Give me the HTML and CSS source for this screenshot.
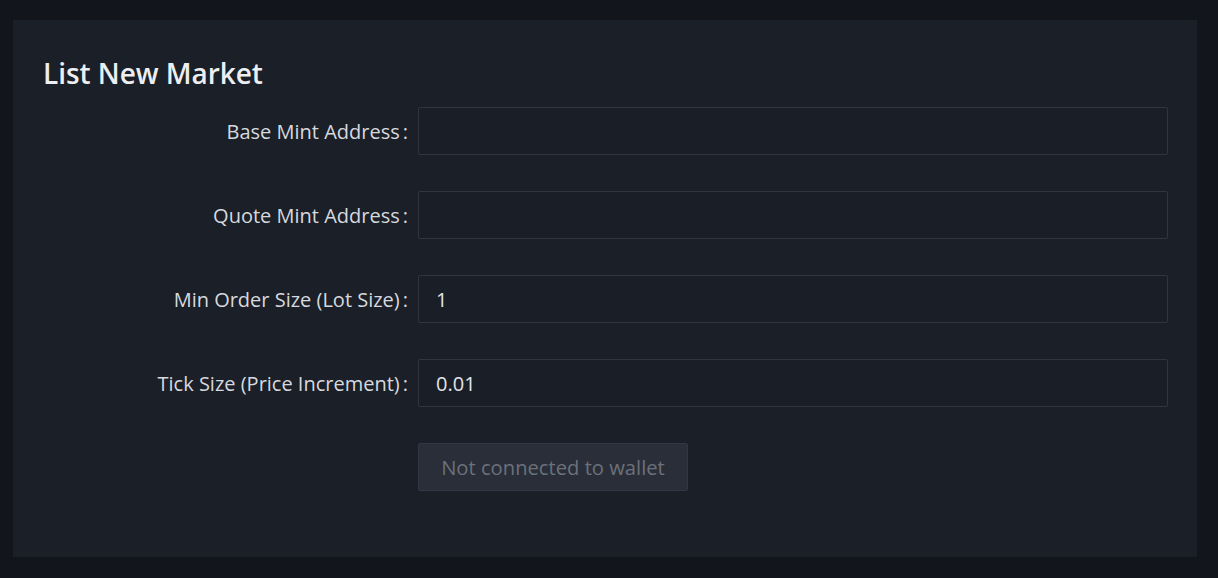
FILE: index.html
```html
<!DOCTYPE html>
<html>
<head>
<meta charset="utf-8">
<link rel="stylesheet" href="styles.css">
</head>
<body>
<div class="card">
  <h2 class="title">List New Market</h2>
  <form class="form">
    <div class="row">
      <label class="label">Base Mint Address<span class="colon">:</span></label>
      <div class="control"><input class="input" type="text" value=""></div>
    </div>
    <div class="row">
      <label class="label">Quote Mint Address<span class="colon">:</span></label>
      <div class="control"><input class="input" type="text" value=""></div>
    </div>
    <div class="row">
      <label class="label">Min Order Size (Lot Size)<span class="colon">:</span></label>
      <div class="control"><input class="input" type="text" value="1"></div>
    </div>
    <div class="row">
      <label class="label">Tick Size (Price Increment)<span class="colon">:</span></label>
      <div class="control"><input class="input" type="text" value="0.01"></div>
    </div>
    <div class="row">
      <div class="label"></div>
      <div class="control"><button class="button" type="button" disabled>Not connected to wallet</button></div>
    </div>
  </form>
</div>
</body>
</html>
```
FILE: styles.css
```css
html, body {
  margin: 0;
  padding: 0;
  background: #12151b;
  width: 1218px;
  height: 578px;
  overflow: hidden;
}
body {
  padding: 20px 21px 21px 13px;
  box-sizing: border-box;
  font-family: "Open Sans", "Noto Sans", sans-serif;
}
.card {
  background: #1b1f27;
  height: 537px;
  box-sizing: border-box;
  padding: 34px 30px 0 30px;
}
.title {
  margin: 0 0 15px 0;
  font-size: 28px;
  font-weight: 600;
  line-height: 38px;
  color: #eceef2;
  letter-spacing: -0.05px;
}
.form {
  display: flex;
  flex-direction: column;
  gap: 36px;
}
.row {
  display: flex;
  align-items: center;
  height: 48px;
}
.label {
  width: 375px;
  flex: none;
  text-align: right;
  font-size: 20px;
  color: #d6d9df;
  box-sizing: border-box;
  white-space: nowrap;
}
.colon {
  margin: 0 10px 0 3px;
}
.control {
  flex: 1;
  display: flex;
}
.input {
  width: 750px;
  height: 48px;
  box-sizing: border-box;
  background: #1a1e26;
  border: 1px solid #30353f;
  border-radius: 2px;
  padding: 0 17px;
  font-family: inherit;
  font-size: 20px;
  color: #e3e5ea;
  outline: none;
}
.button {
  width: 270px;
  height: 48px;
  background: #2a2e38;
  border: 1px solid #323743;
  border-radius: 2px;
  color: #6b717b;
  font-family: inherit;
  font-size: 20.2px;
  padding: 0;
}
```
